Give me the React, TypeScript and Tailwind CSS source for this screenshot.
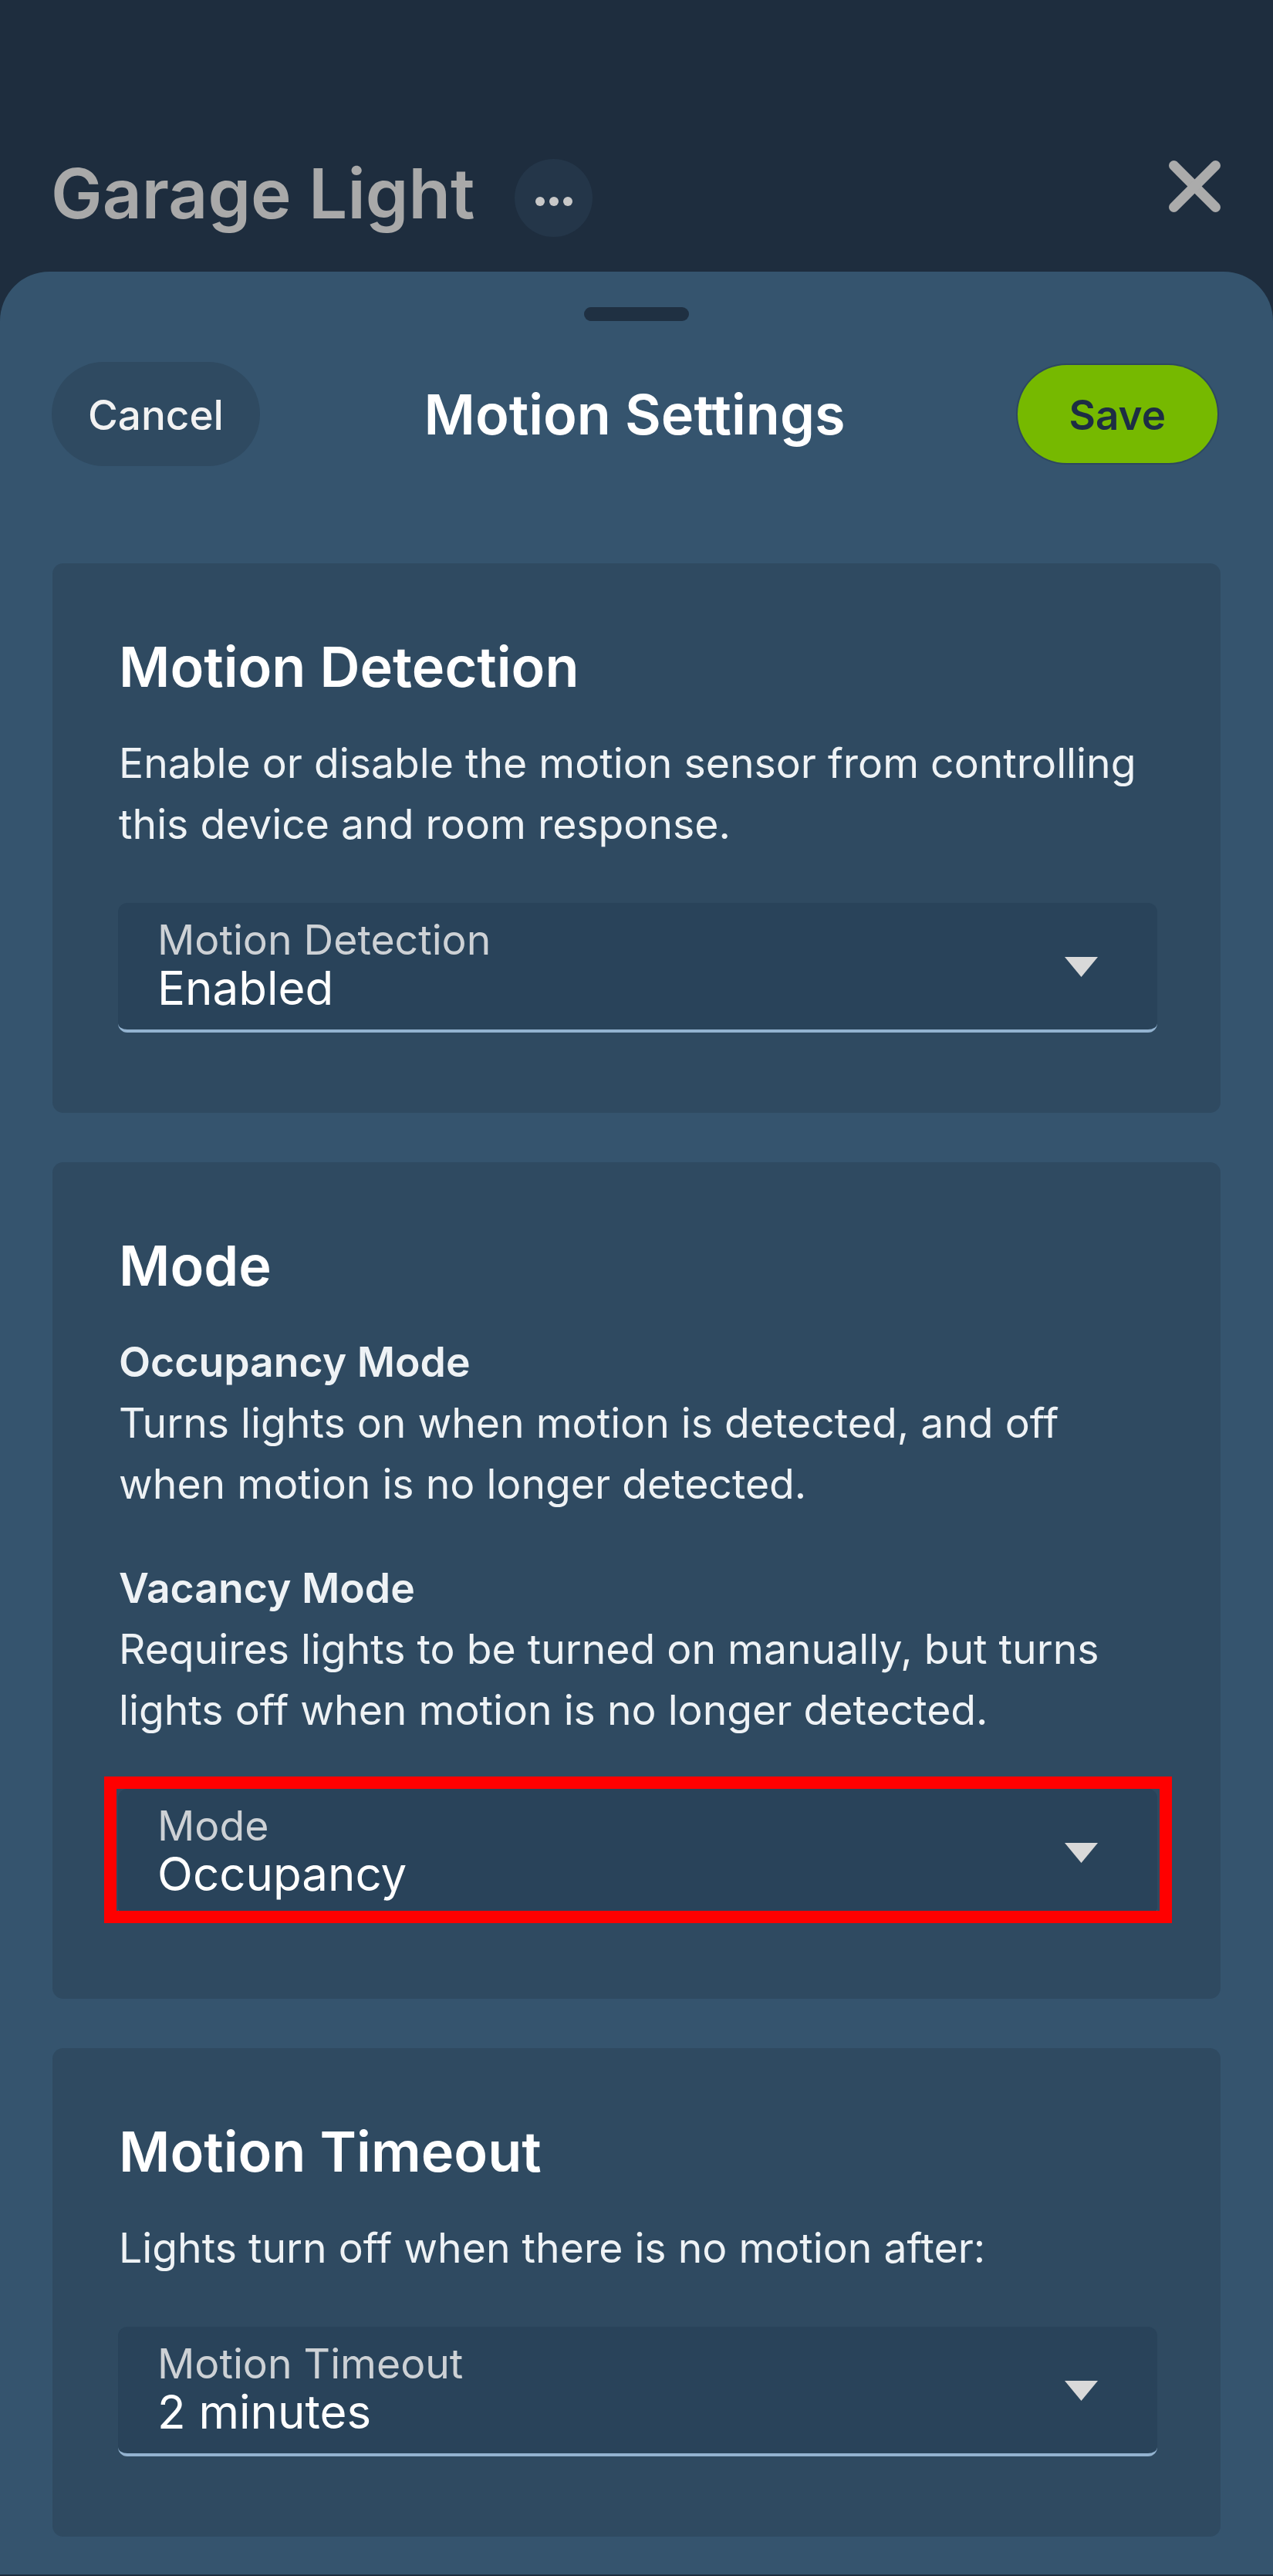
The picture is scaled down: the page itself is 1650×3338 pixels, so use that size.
import React from "react";

function Select({ label, value, highlight }: { label: string; value: string; highlight?: boolean }) {
  return (
    <div className="relative mt-[63px] -ml-[1px] -mr-[4px] flex items-center justify-between rounded-[12px] bg-[#29435a] border-b-[4px] border-[#93b3d0] pt-[20px] pb-[20px] pl-[51px] pr-[77px]">
      <div className="flex flex-col">
        <span className="text-[53.5px] leading-[56px] text-[#cdd1d5]">{label}</span>
        <span className="text-[60px] leading-[68px] text-white">{value}</span>
      </div>
      <svg width="43" height="26" viewBox="0 0 43 26" className="mt-[2px]">
        <polygon points="0,0 43,0 21.5,26" fill="#d9d9d9" />
      </svg>
      {highlight && (
        <div className="absolute -left-[18px] -right-[19px] -top-[16px] -bottom-[10px] border-[16px] border-[#ff0000] pointer-events-none" />
      )}
    </div>
  );
}

function Card({ children }: { children: React.ReactNode }) {
  return <section className="rounded-[14px] bg-[#2f4a61] pt-[90px] pb-[104px] px-[86px]">{children}</section>;
}

function Heading({ children }: { children: React.ReactNode }) {
  return <h2 className="text-[72px] leading-[88px] font-semibold text-white">{children}</h2>;
}

export default function App() {
  return (
    <div className="min-h-[3338px] w-full bg-[#1e2d3e] font-['Inter',sans-serif] antialiased">
      <header className="h-[352px] flex items-start pt-[206px] pl-[66px] pr-[68px]">
        <h1 className="text-[89px] leading-[100px] font-semibold text-[#a9a9a9] -mt-[5px]">Garage Light</h1>
        <div className="ml-[52px] w-[101px] h-[101px] rounded-full bg-[#243649] flex items-center justify-center gap-[6px] pt-[8px]">
          <span className="w-[12px] h-[12px] rounded-full bg-[#c8c8c8]" />
          <span className="w-[12px] h-[12px] rounded-full bg-[#c8c8c8]" />
          <span className="w-[12px] h-[12px] rounded-full bg-[#c8c8c8]" />
        </div>
        <div className="ml-auto pt-[2px]">
          <svg width="67" height="67" viewBox="0 0 67 67">
            <line x1="6.5" y1="6.5" x2="60.5" y2="60.5" stroke="#ababab" strokeWidth="13" strokeLinecap="round" />
            <line x1="60.5" y1="6.5" x2="6.5" y2="60.5" stroke="#ababab" strokeWidth="13" strokeLinecap="round" />
          </svg>
        </div>
      </header>

      <div className="bg-[#35546e] rounded-t-[64px] pt-[46px] pb-[49px]">
        <div className="mx-auto w-[136px] h-[18px] rounded-full bg-[#1f3042]" />

        <div className="mt-[53px] grid grid-cols-[1fr_auto_1fr] items-center pl-[67px] pr-[72px] h-[135px]">
          <button className="justify-self-start h-[135px] px-[47px] pt-[4px] rounded-full bg-[#2f4a61] text-[53px] font-medium text-[#f2f2f2]">
            Cancel
          </button>
          <div className="text-[72px] leading-[88px] font-semibold text-white">Motion Settings</div>
          <button className="justify-self-end h-[127px] px-[67px] pt-[4px] rounded-full bg-[#76b900] text-[53px] font-semibold text-[#1d2d44] shadow-[0_0_0_2px_#2d4860]">
            Save
          </button>
        </div>

        <div className="mt-[126px] mx-[68px] flex flex-col gap-[64px]">
          <Card>
            <Heading>Motion Detection</Heading>
            <p className="mt-[41px] text-[53.5px] leading-[79px] text-[#eef2f5]">
              Enable or disable the motion sensor from controlling this device and room response.
            </p>
            <Select label="Motion Detection" value="Enabled" />
          </Card>

          <Card>
            <Heading>Mode</Heading>
            <div className="mt-[41px] text-[53.5px] leading-[79px] text-[#eef2f5]">
              <div className="font-semibold">Occupancy Mode</div>
              <p>Turns lights on when motion is detected, and off when motion is no longer detected.</p>
              <div className="mt-[56px] font-semibold">Vacancy Mode</div>
              <p>Requires lights to be turned on manually, but turns lights off when motion is no longer detected.</p>
            </div>
            <Select label="Mode" value="Occupancy" highlight />
          </Card>

          <Card>
            <Heading>Motion Timeout</Heading>
            <p className="mt-[41px] text-[53.5px] leading-[79px] text-[#eef2f5]">
              Lights turn off when there is no motion after:
            </p>
            <Select label="Motion Timeout" value="2 minutes" />
          </Card>
        </div>
      </div>
    </div>
  );
}
